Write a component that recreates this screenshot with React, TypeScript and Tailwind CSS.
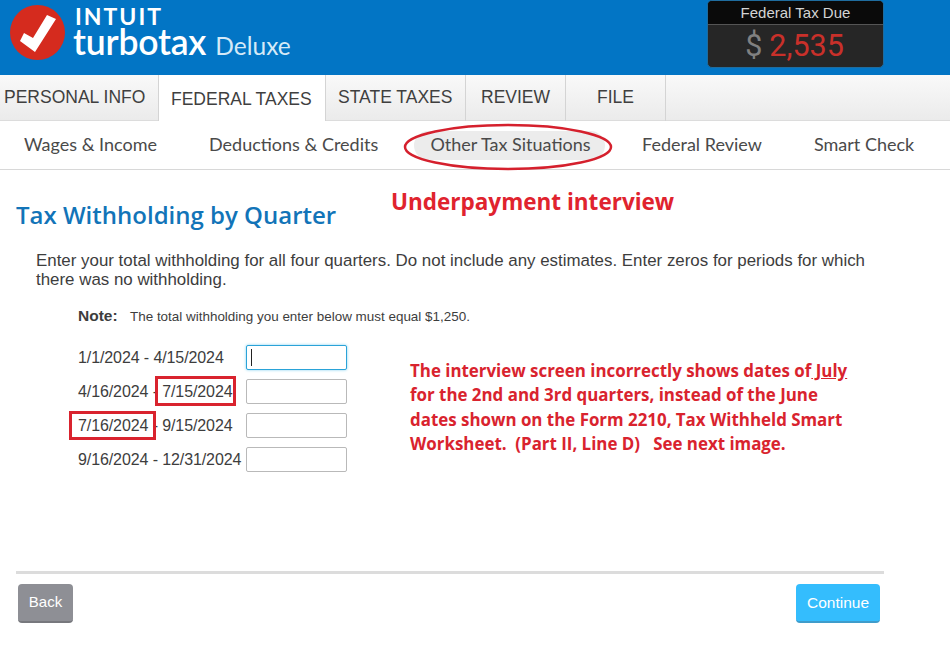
import React from 'react';

const tabs = [
  { label: 'PERSONAL INFO', width: 'w-[159px]', active: false, pad: 'pl-[4px]' },
  { label: 'FEDERAL TAXES', width: 'w-[167px]', active: true, pad: 'pl-[12px]' },
  { label: 'STATE TAXES', width: 'w-[140px]', active: false, pad: 'pl-[12px]' },
  { label: 'REVIEW', width: 'w-[100px]', active: false, pad: 'pl-[15px]' },
  { label: 'FILE', width: 'w-[100px]', active: false, pad: 'pl-[31px]' },
];

const subNav = [
  { label: 'Wages & Income', cls: 'left-[24px]' },
  { label: 'Deductions & Credits', cls: 'left-[209px]' },
  { label: 'Federal Review', cls: 'left-[642px]' },
  { label: 'Smart Check', cls: 'left-[814px]' },
];

const quarters = [
  { from: '1/1/2024', to: '4/15/2024', focused: true },
  { from: '4/16/2024', to: '7/15/2024', focused: false },
  { from: '7/16/2024', to: '9/15/2024', focused: false },
  { from: '9/16/2024', to: '12/31/2024', focused: false },
];

const App: React.FC = () => {
  return (
    <div className="relative w-[950px] h-[653px] overflow-hidden bg-white font-['Liberation_Sans',sans-serif]">
      <header className="flex h-[75px] bg-[#0275c5]">
        <div className="flex w-[708px] pl-[10px] pt-[5px]">
          <svg width="55" height="55" viewBox="0 0 55 55" className="shrink-0">
            <circle cx="27.5" cy="27.5" r="27.5" fill="#d52b1e" />
            <path d="M10 36 L25 47 L46 14 L37 10 L23 33 L14 28 Z" fill="#fff" />
          </svg>
          <div className="ml-[8px] text-white">
            <div className="font-['Lato',sans-serif] font-bold text-[23px] leading-[20px] tracking-[2px] mt-[1px] ml-[2px]">
              INTUIT
            </div>
            <div className="flex items-baseline font-['Lato',sans-serif] leading-[31px]">
              <span className="text-[35.5px] font-semibold tracking-[-0.2px]">turbotax</span>
              <span className="ml-[9px] text-[24.5px] text-[#d5e9f7]">Deluxe</span>
            </div>
          </div>
        </div>
        <div className="w-[177px] h-[68px] -ml-px rounded-[5px] border border-[#1f6c9e] bg-[#262626] overflow-hidden">
          <div className="h-[24px] bg-[#0a0a0a] border-b border-[#555] text-center text-[15px] leading-[23px] text-[#d4d4d4]">
            Federal Tax Due
          </div>
          <div className="flex justify-center items-center h-[42px] font-['Roboto',sans-serif] text-[30.5px] leading-[42px] pr-[2px]">
            <span className="text-[#808080]">$</span>
            <span className="ml-[7px] text-[#c9302a]">2,535</span>
          </div>
        </div>
      </header>

      <nav className="flex h-[46px] bg-gradient-to-b from-[#f9f9f9] to-[#ebebeb] border-b border-[#dcdcdc]">
        {tabs.map((tab) => (
          <div
            key={tab.label}
            className={`${tab.width} ${tab.pad} h-[46px] shrink-0 border-r border-[#d4d4d4] text-[#3f3f3f] text-[17.5px] ${
              tab.active ? 'bg-white pt-[11px] leading-[26px]' : 'pt-[9px] leading-[26px]'
            }`}
          >
            {tab.label}
          </div>
        ))}
      </nav>

      <div className="relative h-[49px] border-b border-[#d8d8d8] font-['Lato',sans-serif] text-[18px] text-[#4a4a4a]">
        {subNav.map((item) => (
          <span key={item.label} className={`absolute top-[11px] leading-[24px] ${item.cls}`}>
            {item.label}
          </span>
        ))}
        <span className="absolute left-[414px] top-[10px] w-[191px] h-[29px] rounded-full bg-[#ececec] text-center leading-[26px] pl-[2px]">
          Other Tax Situations
        </span>
      </div>

      <main className="pl-[16px] w-[884px]">
        <h1 className="mt-[29px] font-['Open_Sans',sans-serif] font-semibold text-[24px] leading-[32px] text-[#1274b8]">
          Tax Withholding by Quarter
        </h1>
        <p className="mt-[20px] ml-[20px] w-[840px] text-[16.9px] leading-[19px] text-[#3d3d3d]">
          Enter your total withholding for all four quarters. Do not include any estimates. Enter zeros for periods for which there was no withholding.
        </p>
        <div className="mt-[17px] ml-[62px] flex items-baseline text-[#3d3d3d]">
          <span className="w-[52px] font-bold text-[15.5px] leading-[20px]">Note:</span>
          <span className="text-[13.45px] leading-[20px]">The total withholding you enter below must equal $1,250.</span>
        </div>
        <div className="mt-[18px] ml-[62px] flex flex-col gap-[9px]">
          {quarters.map((q) => (
            <div key={q.from} className="flex items-center h-[25px] text-[16px] text-[#3d3d3d]">
              <span className="w-[168px] whitespace-nowrap tracking-[-0.1px]">
                {q.from} - {q.to}
              </span>
              <div
                className={`w-[101px] h-[25px] rounded-[2px] border bg-white ${
                  q.focused
                    ? 'border-[#2aa3d8] shadow-[0_0_3px_#7fd0f0] pl-[4px] pt-[3px]'
                    : 'border-[#b9b9b9]'
                }`}
              >
                {q.focused && <div className="w-px h-[17px] bg-[#222]" />}
              </div>
            </div>
          ))}
        </div>
        <div className="mt-[99px] h-[3px] bg-[#dcdcdc]" />
        <div className="mt-[10px] flex justify-between pl-[2px] pr-[4px]">
          <button className="w-[55px] h-[39px] rounded-[4px] bg-[#8e8f95] border-b-2 border-[#77787d] text-white text-[15px]">
            Back
          </button>
          <button className="w-[84px] h-[39px] rounded-[4px] bg-[#34bdfd] border-b-2 border-[#3f9ccb] text-white text-[15.5px]">
            Continue
          </button>
        </div>
      </main>

      {/* annotations drawn on top of the screenshot */}
      <svg width="212" height="50" viewBox="0 0 212 50" className="absolute left-[403px] top-[122px]">
        <ellipse cx="105" cy="25" rx="103" ry="22" fill="none" stroke="#d5202d" strokeWidth="2.5" />
      </svg>
      <div className="absolute left-[391px] top-[186px] font-['Open_Sans',sans-serif] font-bold text-[22.5px] leading-[32px] text-[#e0232e] whitespace-nowrap">
        Underpayment interview
      </div>
      <div className="absolute left-[155px] top-[376px] w-[81px] h-[30px] border-[3px] border-[#d9232e]" />
      <div className="absolute left-[69px] top-[411px] w-[87px] h-[29px] border-[3px] border-[#d9232e]" />
      <div className="absolute left-[410px] top-[359px] font-['Open_Sans',sans-serif] font-bold text-[16.9px] leading-[24.3px] text-[#d9232e] whitespace-nowrap">
        <div>
          The interview screen incorrectly shows dates of<span className="underline"> July</span>
        </div>
        <div>for the 2nd and 3rd quarters, instead of the June</div>
        <div>dates shown on the Form 2210, Tax Withheld Smart</div>
        <div>
          Worksheet.&nbsp; (Part II, Line D)&nbsp;&nbsp; See next image.
        </div>
      </div>
    </div>
  );
};

export default App;
